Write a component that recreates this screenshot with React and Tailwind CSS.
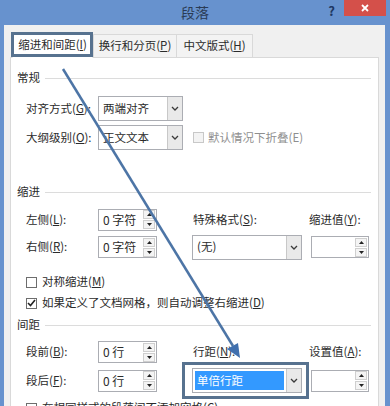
import React from 'react';

const Key = ({ children }) => <span className="underline underline-offset-[1px]">{children}</span>;

function Chevron() {
  return (
    <svg width="8" height="5" viewBox="0 0 8 5">
      <polyline points="1,1 4,4 7,1" fill="none" stroke="#3a3a3a" strokeWidth="1.3" />
    </svg>
  );
}

function Select({ className, children, selected }) {
  return (
    <div className={`flex h-[25px] border border-[#abadb3] bg-white ${className}`}>
      <div className="flex flex-1 items-center p-[2px]">
        {selected ? (
          <div className="flex h-full w-full items-center bg-[#3399ff] pl-[2px] text-white">{children}</div>
        ) : (
          <span className="pl-[2px]">{children}</span>
        )}
      </div>
      <div className="flex w-[15px] items-center justify-center border-l border-[#c8c8c8] bg-[#e9e9e9]">
        <Chevron />
      </div>
    </div>
  );
}

function SpinBtn({ up }) {
  return (
    <div className="flex h-[9px] w-[12px] items-center justify-center border border-[#cfcfcf] bg-[#f4f4f4]">
      <svg width="5" height="3" viewBox="0 0 5 3">
        <polygon points={up ? '0,3 2.5,0 5,3' : '0,0 2.5,3 5,0'} fill="#222" />
      </svg>
    </div>
  );
}

function Spin({ value, className }) {
  return (
    <div className={`flex h-[22px] border border-[#abadb3] bg-white ${className}`}>
      <div className="flex flex-1 items-center pl-[4px] text-[12px]">{value}</div>
      <div className="flex flex-col justify-center gap-px pr-px">
        <SpinBtn up />
        <SpinBtn />
      </div>
    </div>
  );
}

function Check({ checked, disabled }) {
  return (
    <div
      className={`flex h-[11px] w-[11px] shrink-0 items-center justify-center border ${
        disabled ? 'border-[#c8c8c8] bg-[#f3f3f3]' : 'border-[#6d6d6d] bg-white'
      }`}
    >
      {checked && (
        <svg width="9" height="8" viewBox="0 0 9 8">
          <polyline points="1,4 3.5,6.5 8,1" fill="none" stroke="#222" strokeWidth="1.6" />
        </svg>
      )}
    </div>
  );
}

function Group({ title, className }) {
  return (
    <div className={`flex h-[16px] items-center ${className}`}>
      <span>{title}</span>
      <div className="ml-[5px] h-px flex-1 bg-[#dcdcdc]" />
    </div>
  );
}

export default function App() {
  return (
    <div className="relative flex h-[406px] w-[390px] flex-col overflow-hidden bg-[#6792ce] font-['Noto_Sans_CJK_SC','Noto_Sans',sans-serif] text-[11.5px] text-[#2b2b2b]">
      {/* title bar */}
      <div className="flex h-[25px] shrink-0">
        <div className="flex-1" />
        <div className="pt-[2px] text-[14px] text-[#2a3b55]">段落</div>
        <div className="flex flex-1 items-start justify-end">
          <span className="mt-[1px] text-[13px] font-bold text-[#1d3763]">?</span>
          <div className="ml-[9px] mr-[4px] flex h-[16px] w-[42px] items-center justify-center bg-[#d4504a]">
            <svg width="8" height="8" viewBox="0 0 8 8">
              <path d="M1 1 L7 7 M7 1 L1 7" stroke="#fff" strokeWidth="1.8" />
            </svg>
          </div>
        </div>
      </div>

      <div className="ml-[4px] mr-[5px] flex flex-1 flex-col bg-[#f0f0f0] px-[6px] pt-[7px]">
        {/* tabs */}
        <div className="relative z-10 flex h-[25px] items-end pl-[2px]">
          <div className="-mb-px flex h-[26px] w-[81px] items-center justify-center border border-b-white border-[#d9d9d9] bg-white">
            缩进和间距(<Key>I</Key>)
          </div>
          <div className="flex h-[23px] w-[84px] items-center justify-center border border-b-0 border-[#d9d9d9] bg-[#f3f3f3]">
            换行和分页(<Key>P</Key>)
          </div>
          <div className="flex h-[23px] w-[76px] items-center justify-center border border-b-0 border-l-0 border-[#d9d9d9] bg-[#f3f3f3]">
            中文版式(<Key>H</Key>)
          </div>
        </div>

        {/* panel */}
        <div className="flex flex-1 flex-col border border-[#d9d9d9] bg-white pl-[6px] pr-[7px]">
          <Group title="常规" className="mt-[12px]" />
          <div className="mt-[10px] flex h-[25px] items-center pl-[9px]">
            <div className="w-[72px]">对齐方式(<Key>G</Key>):</div>
            <Select className="w-[85px]">两端对齐</Select>
          </div>
          <div className="mt-[4px] flex h-[25px] items-center pl-[9px]">
            <div className="w-[72px]">大纲级别(<Key>O</Key>):</div>
            <Select className="w-[85px]">正文文本</Select>
            <div className="ml-[10px] flex items-center gap-[4px] text-[#8f8f8f]">
              <Check disabled />
              <span>默认情况下折叠(E)</span>
            </div>
          </div>

          <Group title="缩进" className="mt-[34px]" />
          <div className="mt-[8px] flex h-[23px] items-center pl-[9px]">
            <div className="w-[72px]">左侧(<Key>L</Key>):</div>
            <Spin value="0 字符" className="w-[59px]" />
            <div className="w-[35px]" />
            <div className="w-[110px] pl-px">特殊格式(<Key>S</Key>):</div>
            <div className="w-[7px]" />
            <div className="w-[60px]">缩进值(<Key>Y</Key>):</div>
          </div>
          <div className="mt-[4px] flex h-[24px] items-center pl-[9px]">
            <div className="w-[72px]">右侧(<Key>R</Key>):</div>
            <Spin value="0 字符" className="w-[59px]" />
            <div className="w-[35px]" />
            <Select className="w-[110px]">(无)</Select>
            <div className="w-[9px]" />
            <Spin value="" className="w-[58px]" />
          </div>

          <div className="mt-[15px] flex h-[16px] items-center gap-[5px] pl-[9px]">
            <Check />
            <span>对称缩进(<Key>M</Key>)</span>
          </div>
          <div className="mt-[5px] flex h-[16px] items-center gap-[5px] pl-[9px]">
            <Check checked />
            <span>如果定义了文档网格，则自动调整右缩进(<Key>D</Key>)</span>
          </div>

          <Group title="间距" className="mt-[6px]" />
          <div className="mt-[8px] flex h-[22px] items-center pl-[9px]">
            <div className="w-[72px]">段前(<Key>B</Key>):</div>
            <Spin value="0 行" className="w-[59px]" />
            <div className="w-[35px]" />
            <div className="w-[110px] pl-px">行距(<Key>N</Key>):</div>
            <div className="w-[7px]" />
            <div className="w-[60px]">设置值(<Key>A</Key>):</div>
          </div>
          <div className="mt-[5px] flex h-[25px] items-center pl-[9px]">
            <div className="w-[72px]">段后(<Key>F</Key>):</div>
            <Spin value="0 行" className="w-[59px]" />
            <div className="w-[35px]" />
            <Select className="w-[110px]" selected>
              单倍行距
            </Select>
            <div className="w-[9px]" />
            <Spin value="" className="w-[58px]" />
          </div>
          <div className="mt-[7px] flex h-[16px] items-center gap-[5px] pl-[9px]">
            <Check />
            <span>在相同样式的段落间不添加空格(<Key>C</Key>)</span>
          </div>
        </div>
      </div>

      {/* annotations */}
      <div className="pointer-events-none absolute left-[11px] top-[32px] z-20 h-[25px] w-[82px] border-[3px] border-[#57728f]" />
      <div className="pointer-events-none absolute left-[182px] top-[362px] z-20 h-[37px] w-[127px] border-[3px] border-[#57728f]" />
      <svg className="pointer-events-none absolute left-0 top-0 z-30" width="390" height="406" viewBox="0 0 390 406">
        <line x1="63" y1="69" x2="233" y2="346" stroke="#4d75a6" strokeWidth="2.5" />
        <polygon points="240,358 238,343 227,349" fill="#3f6fae" />
      </svg>
    </div>
  );
}
